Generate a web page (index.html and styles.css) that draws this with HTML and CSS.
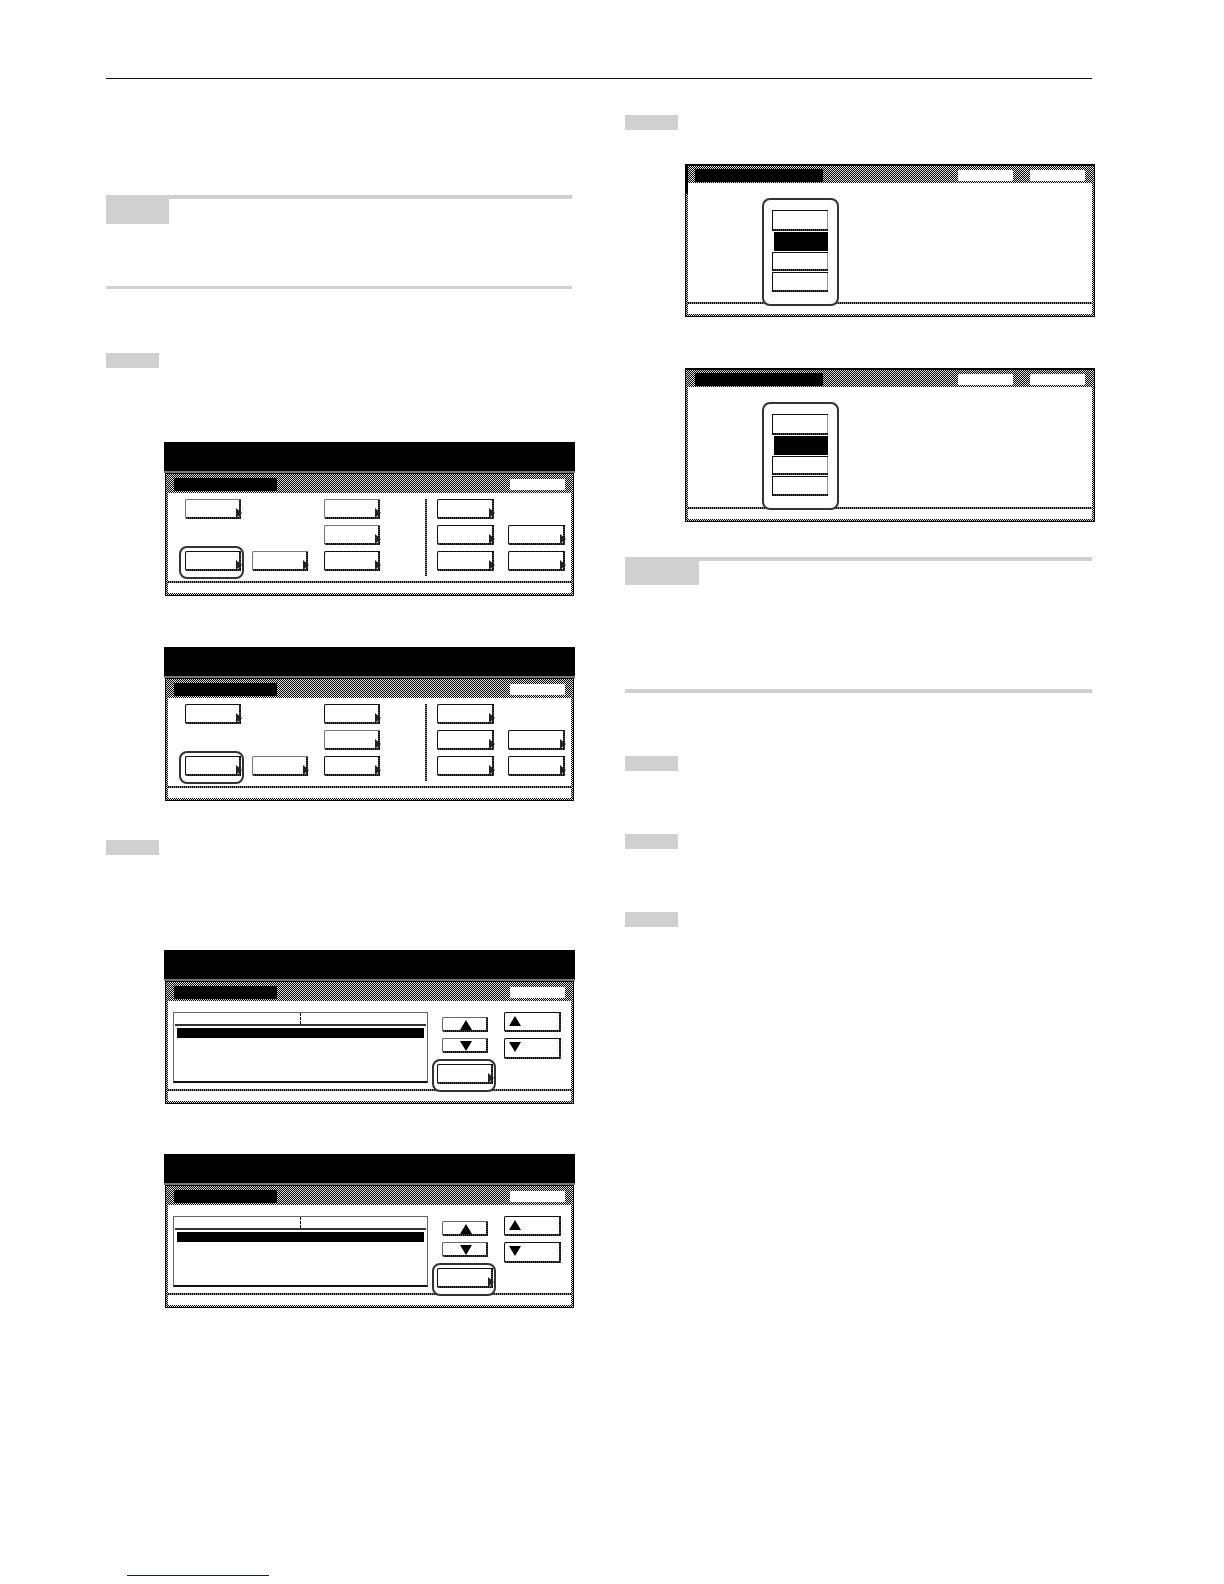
FILE: index.html
```html
<!DOCTYPE html>
<html lang="en">
<head>
<meta charset="utf-8">
<title>Manual page</title>
<link rel="stylesheet" href="styles.css">
</head>
<body>
<div class="page">
  <div class="top-rule"></div>
  <div class="columns">
    <div class="col col-left">
      <div class="note note-a"><div class="note-label"></div><div class="note-bar"></div></div>
      <div class="step step-1"></div>

      <div class="screen screen-1">
        <div class="band"></div>
        <div class="panel">
          <div class="head"><div class="title"></div><div class="head-btn"></div></div>
          <div class="menu">
            <div class="btn more soft ca r1"></div>
            <div class="btn more soft cc r1"></div>
            <div class="btn more soft cc r2"></div>
            <div class="rule-v"></div>
            <div class="btn more cd r1"></div>
            <div class="btn more cd r2"></div>
            <div class="btn more ce r2"></div>
            <div class="btn more ca r3 hl hl-menu"></div>
            <div class="btn more soft cb r3"></div>
            <div class="btn more cc r3"></div>
            <div class="btn more cd r3"></div>
            <div class="btn more ce r3"></div>
          </div>
          <div class="foot"></div>
        </div>
      </div>

      <div class="screen screen-2">
        <div class="band"></div>
        <div class="panel">
          <div class="head"><div class="title"></div><div class="head-btn"></div></div>
          <div class="menu">
            <div class="btn more ca r1"></div>
            <div class="btn more cc r1"></div>
            <div class="btn more soft cc r2"></div>
            <div class="rule-v"></div>
            <div class="btn more cd r1"></div>
            <div class="btn more cd r2"></div>
            <div class="btn more ce r2"></div>
            <div class="btn more ca r3 hl hl-menu"></div>
            <div class="btn more soft cb r3"></div>
            <div class="btn more cc r3"></div>
            <div class="btn more cd r3"></div>
            <div class="btn more ce r3"></div>
          </div>
          <div class="foot"></div>
        </div>
      </div>

      <div class="step step-2"></div>

      <div class="screen screen-3">
        <div class="band"></div>
        <div class="panel">
          <div class="head"><div class="title"></div><div class="head-btn"></div></div>
          <div class="listing">
            <div class="list">
              <div class="list-head"><div class="list-tick"></div></div>
              <div class="list-sel"></div>
            </div>
            <div class="ctl-a">
              <div class="btn small up"></div>
              <div class="btn small down"></div>
              <div class="btn more wide hl hl-list"></div>
            </div>
            <div class="ctl-b">
              <div class="btn big up"></div>
              <div class="btn big big-down down"></div>
            </div>
          </div>
          <div class="foot"></div>
        </div>
      </div>

      <div class="screen screen-4">
        <div class="band"></div>
        <div class="panel">
          <div class="head"><div class="title"></div><div class="head-btn"></div></div>
          <div class="listing">
            <div class="list">
              <div class="list-head"><div class="list-tick"></div></div>
              <div class="list-sel"></div>
            </div>
            <div class="ctl-a">
              <div class="btn small up"></div>
              <div class="btn small down"></div>
              <div class="btn more wide hl hl-list"></div>
            </div>
            <div class="ctl-b">
              <div class="btn big up"></div>
              <div class="btn big big-down down"></div>
            </div>
          </div>
          <div class="foot"></div>
        </div>
      </div>
    </div>

    <div class="col col-right">
      <div class="step"></div>

      <div class="screen wide-screen ws-1">
        <div class="panel">
          <div class="head head-wide"><div class="title title-wide"></div><div class="head-btn"></div><div class="head-btn"></div></div>
          <div class="options">
            <div class="stack hl hl-stack">
              <div class="opt opt-1"></div>
              <div class="opt opt-on"></div>
              <div class="opt opt-3"></div>
              <div class="opt opt-4"></div>
            </div>
          </div>
          <div class="foot"></div>
        </div>
      </div>

      <div class="screen wide-screen ws-2">
        <div class="panel">
          <div class="head head-wide"><div class="title title-wide"></div><div class="head-btn"></div><div class="head-btn"></div></div>
          <div class="options">
            <div class="stack hl hl-stack">
              <div class="opt opt-1"></div>
              <div class="opt opt-on"></div>
              <div class="opt opt-3"></div>
              <div class="opt opt-4"></div>
            </div>
          </div>
          <div class="foot"></div>
        </div>
      </div>

      <div class="note note-b"><div class="note-label"></div><div class="note-bar"></div></div>
      <div class="step step-r"></div>
      <div class="step step-r"></div>
      <div class="step step-r"></div>
    </div>
  </div>
  <div class="link-line"></div>
</div>
</body>
</html>
```
FILE: styles.css
```css
* { box-sizing: border-box; }
html, body { margin: 0; background: #fff; }
body { font-family: "Liberation Sans", Arial, sans-serif; }

:root {
  --dots-x: repeating-linear-gradient(90deg, #000 0 1px, #888 1px 2px);
  --dots-y: repeating-linear-gradient(180deg, #000 0 1px, #888 1px 2px);
  --edge-x: repeating-linear-gradient(90deg, #000 0 1px, #444 1px 2px);
  --edge-y: repeating-linear-gradient(180deg, #000 0 1px, #444 1px 2px);
  --dither: conic-gradient(#000 25%, #ddd 0 50%, #000 0 75%, #ddd 0) 0 0 / 2px 2px;
}

.page { padding: 78px 0 0 106px; width: 1224px; height: 1584px; overflow: hidden; }
.top-rule { width: 986px; height: 1px; background: #111; }
.columns { display: flex; gap: 53px; margin-top: 36px; align-items: flex-start; }
.col { display: flex; flex-direction: column; align-items: flex-start; flex: none; }
.col-left { width: 466px; padding-top: 80px; }
.col-right { width: 467px; }

/* grey tags */
.step { width: 53px; height: 15px; background: #d0d0d0; flex: none; }
.step-1 { margin-top: 64px; }
.step-2 { margin-top: 39px; }
.step-r { margin-top: 63px; }

.note { display: flex; width: 100%; align-items: flex-start; border-bottom: 3px solid #d0d0d0; }
.note-label { background: #d0d0d0; flex: none; }
.note-bar { flex: 1; height: 4px; background: #d0d0d0; }
.note-a { height: 94px; }
.note-a .note-label { width: 63px; height: 29px; }
.note-b { height: 136px; margin-top: 35px; border-bottom-width: 4px; }
.note-b .note-label { width: 74px; height: 28px; }

/* machine screens */
.screen { width: 411px; height: 154px; margin-left: 58px; display: flex; flex-direction: column; flex: none; }
.screen-1 { margin-top: 74px; }
.screen-2 { margin-top: 51px; }
.screen-3 { margin-top: 95px; }
.screen-4 { margin-top: 50px; }
.wide-screen { width: 410px; margin-left: 60px; }
.ws-1 { margin-top: 34px; height: 153px; }
.ws-2 { margin-top: 51px; }

.band { height: 31px; background: #000; border-bottom: 2px solid #777; flex: none; }

.panel {
  flex: 1;
  min-height: 0;
  margin: 0 1px;
  display: flex;
  flex-direction: column;
  border: 1px solid #000;
  padding: 0 2px 2px 2px;
  background: var(--dither);
}
.wide-screen .panel { margin: 0; border-top-width: 2px; }
.ws-1 .panel { background: linear-gradient(#000, #000) 0 0 / 2px 28px no-repeat, var(--dither); }

.head { height: 19px; flex: none; display: flex; align-items: center; justify-content: space-between; padding: 2px 6px 0 6px; }
.head-wide { height: 17px; padding: 1px 7px 0 7px; justify-content: flex-start; gap: 17px; }
.title { width: 103px; height: 13px; background: #000; border-radius: 1px; }
.title-wide { width: 128px; margin-right: auto; }
.head-btn { width: 55px; height: 11px; background: #fff; border-radius: 1px; }

.foot { height: 12px; flex: none; background: var(--dots-x) top / 100% 2px no-repeat, #fff; }

/* menu screens */
.menu {
  flex: 1;
  min-height: 0;
  position: relative;
  z-index: 1;
  background: #fff;
  display: grid;
  grid-template-columns: 56px 11px 56px 16px 56px 45px 2px 10px 57px 14px 57px;
  grid-template-rows: 20px 20px 20px;
  row-gap: 6px;
  padding: 6px 0 0 17px;
}
.ca { grid-column: 1; }
.cb { grid-column: 3; }
.cc { grid-column: 5; }
.cd { grid-column: 9; }
.ce { grid-column: 11; }
.r1 { grid-row: 1; }
.r2 { grid-row: 2; }
.r3 { grid-row: 3; }
.rule-v { grid-column: 7; grid-row: 1 / 4; height: 77px; background: var(--dots-y); }

/* buttons */
.btn {
  position: relative;
  border-top: 1px solid #111;
  border-left: 1px solid #111;
  border-radius: 2px 0 0 2px;
  background:
    var(--edge-x) bottom / 100% 2px no-repeat,
    var(--edge-y) right / 2px 100% no-repeat,
    #fff;
}
.soft { border-top-color: #777; border-left-color: #777; }
.more::after {
  content: "";
  position: absolute;
  right: -1px;
  bottom: 1px;
  border-left: 6px solid #222;
  border-top: 5px solid transparent;
  border-bottom: 5px solid transparent;
}
.up::before, .down::before {
  content: "";
  position: absolute;
  left: 50%;
  margin-left: -6px;
  border-left: 6px solid transparent;
  border-right: 6px solid transparent;
}
.up::before { top: 2px; border-bottom: 10px solid #000; }
.down::before { top: 2px; border-top: 10px solid #000; }

/* highlight rings */
.hl::before {
  content: "";
  position: absolute;
  z-index: -1;
  background: #fff;
  border: 2px solid #333;
  border-radius: 8px;
}
.hl-menu::before { top: -6px; left: -7px; right: -3px; bottom: -8px; }
.hl-list::before { top: -6px; left: -6px; right: -3px; bottom: -8px; }
.hl-stack::before { top: -12px; left: -10px; right: -11px; bottom: -14px; }

/* list screens */
.listing {
  flex: 1;
  min-height: 0;
  position: relative;
  z-index: 1;
  background: #fff;
  display: flex;
  align-items: flex-start;
  padding: 11px 0 0 5px;
}
.list {
  width: 255px;
  height: 71px;
  flex: none;
  border: 1px solid #666;
  border-bottom: 2px solid #111;
  padding: 0 1px;
}
.list-head { height: 13px; border-bottom: 2px solid #333; display: flex; justify-content: center; }
.list-tick { height: 11px; border-left: 1px dashed #000; }
.list-sel { height: 10px; margin: 2px 2px 0 2px; background: #000; }
.ctl-a { width: 56px; margin-left: 9px; display: flex; flex-direction: column; align-items: center; padding-top: 5px; flex: none; }
.small { width: 46px; height: 15px; border-top-color: #666; border-left-color: #666; margin-bottom: 6px; }
.wide { width: 56px; height: 20px; margin-top: 5px; }
.ctl-b { width: 57px; margin-left: 11px; display: flex; flex-direction: column; gap: 6px; flex: none; }
.big { height: 20px; }
.big-down { height: 21px; }
.big.up::before, .big.down::before { left: 4px; margin-left: 0; top: 3px; }

/* option stacks */
.options { flex: 1; min-height: 0; position: relative; z-index: 1; background: #fff; padding: 27px 0 0 84px; }
.stack { position: relative; width: 56px; display: flex; flex-direction: column; gap: 1px; }
.opt {
  border-top: 1px solid #111;
  border-left: 1px solid #111;
  background:
    var(--edge-x) bottom / 100% 2px no-repeat,
    linear-gradient(#999, #999) right / 1px 100% no-repeat,
    #fff;
}
.opt-1 { height: 21px; }
.opt-on { height: 19px; margin-left: 2px; border-color: #000; background: #000; }
.opt-3 { height: 19px; }
.opt-4 { height: 20px; }

.link-line { width: 142px; height: 1px; margin: 267px 0 0 21px; background: #001a8c; }
```
